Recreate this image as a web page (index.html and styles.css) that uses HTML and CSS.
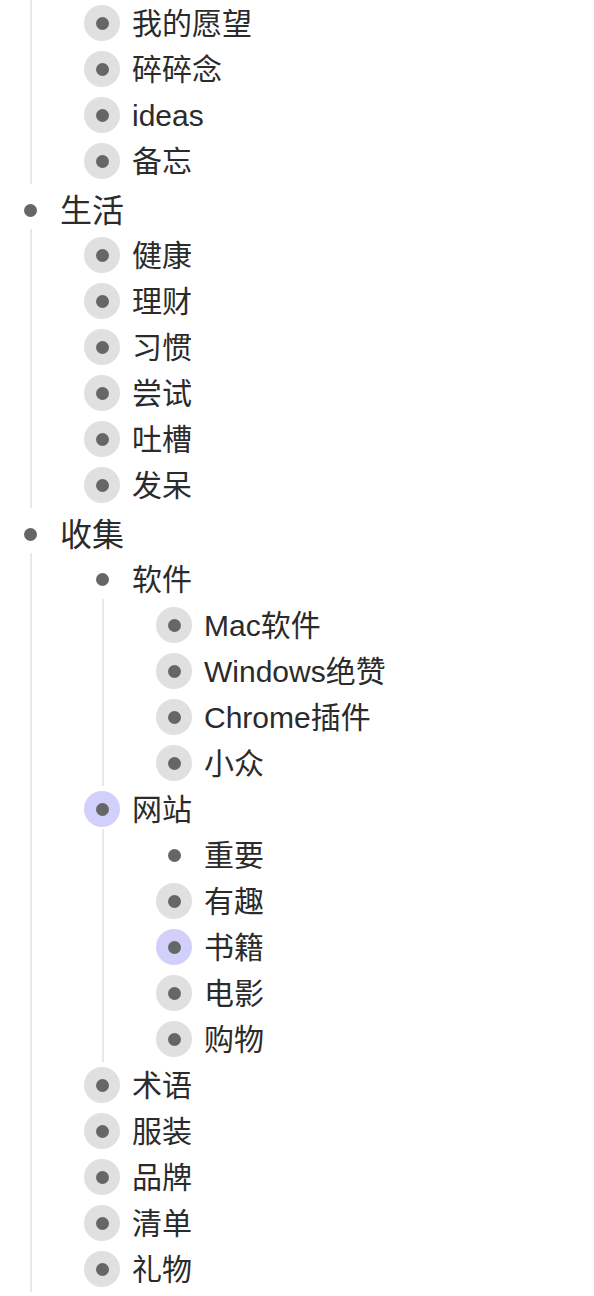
FILE: index.html
```html
<!DOCTYPE html>
<html lang="zh">
<head>
<meta charset="utf-8">
<title>Outline</title>
<link rel="stylesheet" href="styles.css">
</head>
<body>
<div class="tree">
  <div class="children first">
    <div class="item"><div class="row"><span class="bullet halo"><i></i></span><span class="text">我的愿望</span></div></div>
    <div class="item"><div class="row"><span class="bullet halo"><i></i></span><span class="text">碎碎念</span></div></div>
    <div class="item"><div class="row"><span class="bullet halo"><i></i></span><span class="text">ideas</span></div></div>
    <div class="item"><div class="row"><span class="bullet halo"><i></i></span><span class="text">备忘</span></div></div>
  </div>

  <div class="item">
    <div class="row top"><span class="bullet"><i></i></span><span class="text">生活</span></div>
    <div class="children">
      <div class="item"><div class="row"><span class="bullet halo"><i></i></span><span class="text">健康</span></div></div>
      <div class="item"><div class="row"><span class="bullet halo"><i></i></span><span class="text">理财</span></div></div>
      <div class="item"><div class="row"><span class="bullet halo"><i></i></span><span class="text">习惯</span></div></div>
      <div class="item"><div class="row"><span class="bullet halo"><i></i></span><span class="text">尝试</span></div></div>
      <div class="item"><div class="row"><span class="bullet halo"><i></i></span><span class="text">吐槽</span></div></div>
      <div class="item"><div class="row"><span class="bullet halo"><i></i></span><span class="text">发呆</span></div></div>
    </div>
  </div>

  <div class="item">
    <div class="row top"><span class="bullet"><i></i></span><span class="text">收集</span></div>
    <div class="children">
      <div class="item">
        <div class="row"><span class="bullet"><i></i></span><span class="text">软件</span></div>
        <div class="children">
          <div class="item"><div class="row"><span class="bullet halo"><i></i></span><span class="text">Mac软件</span></div></div>
          <div class="item"><div class="row"><span class="bullet halo"><i></i></span><span class="text">Windows绝赞</span></div></div>
          <div class="item"><div class="row"><span class="bullet halo"><i></i></span><span class="text">Chrome插件</span></div></div>
          <div class="item"><div class="row"><span class="bullet halo"><i></i></span><span class="text">小众</span></div></div>
        </div>
      </div>
      <div class="item">
        <div class="row"><span class="bullet halo blue"><i></i></span><span class="text">网站</span></div>
        <div class="children">
          <div class="item"><div class="row"><span class="bullet"><i></i></span><span class="text">重要</span></div></div>
          <div class="item"><div class="row"><span class="bullet halo"><i></i></span><span class="text">有趣</span></div></div>
          <div class="item"><div class="row"><span class="bullet halo blue"><i></i></span><span class="text">书籍</span></div></div>
          <div class="item"><div class="row"><span class="bullet halo"><i></i></span><span class="text">电影</span></div></div>
          <div class="item"><div class="row"><span class="bullet halo"><i></i></span><span class="text">购物</span></div></div>
        </div>
      </div>
      <div class="item"><div class="row"><span class="bullet halo"><i></i></span><span class="text">术语</span></div></div>
      <div class="item"><div class="row"><span class="bullet halo"><i></i></span><span class="text">服装</span></div></div>
      <div class="item"><div class="row"><span class="bullet halo"><i></i></span><span class="text">品牌</span></div></div>
      <div class="item"><div class="row"><span class="bullet halo"><i></i></span><span class="text">清单</span></div></div>
      <div class="item"><div class="row"><span class="bullet halo"><i></i></span><span class="text">礼物</span></div></div>
    </div>
  </div>
</div>
</body>
</html>
```

FILE: styles.css
```css
html, body {
  margin: 0;
  padding: 0;
  background: #ffffff;
}

body {
  font-family: "Liberation Sans", "Noto Sans CJK SC", sans-serif;
  color: #2b2b2b;
  width: 594px;
  height: 1296px;
  overflow: hidden;
}

.tree {
  padding: 0;
}

.row {
  display: flex;
  align-items: center;
  height: 46px;
  padding-left: 12px;
  gap: 12px;
  font-size: 30px;
}

.row.top {
  height: 44px;
  padding-top: 4px;
  font-size: 32px;
}

.bullet {
  flex: none;
  width: 36px;
  height: 36px;
  border-radius: 50%;
  display: flex;
  align-items: center;
  justify-content: center;
}

.bullet i {
  display: block;
  width: 13px;
  height: 13px;
  border-radius: 50%;
  background: #666666;
}

.bullet.halo {
  background: #e0e0e0;
}

.bullet.halo.blue {
  background: #d0d0fa;
}

.text {
  line-height: 1;
  padding-top: 2px;
  white-space: nowrap;
}

.children {
  margin: -3px 0 3px 30px;
  padding: 3px 0 0 40px;
  border-left: 2px solid #e8e8e8;
}

.children.first {
  margin-top: 0;
  padding-top: 0;
}

.children > .item:last-child {
  margin-bottom: -3px;
}
```
